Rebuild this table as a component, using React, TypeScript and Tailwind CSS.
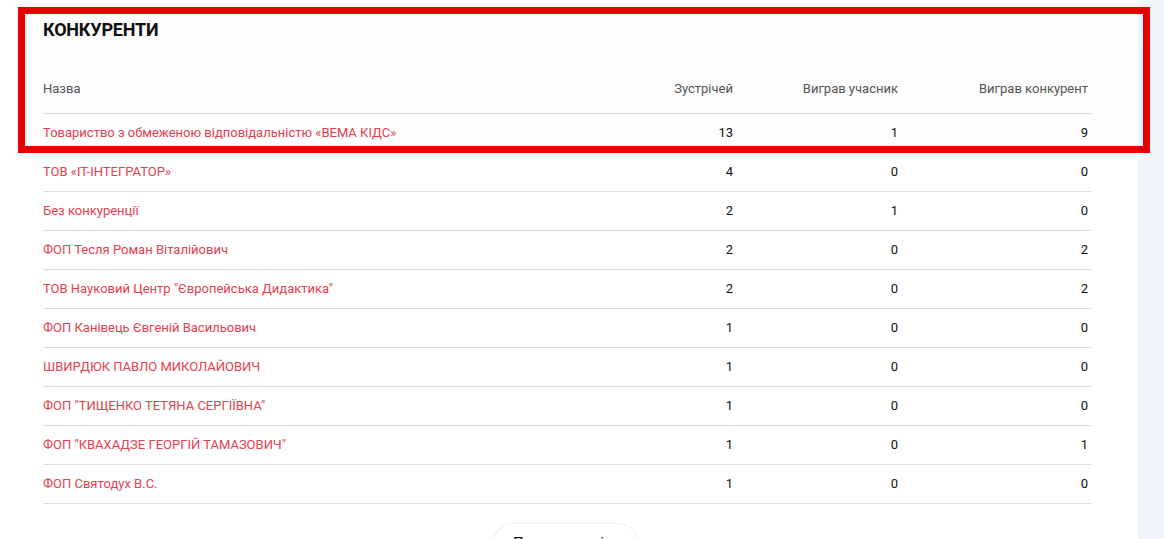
import React from "react";

const rows: [string, number, number, number][] = [
  ["Товариство з обмеженою відповідальністю «ВЕМА КІДС»", 13, 1, 9],
  ["ТОВ «ІТ-ІНТЕГРАТОР»", 4, 0, 0],
  ["Без конкуренції", 2, 1, 0],
  ["ФОП Тесля Роман Віталійович", 2, 0, 2],
  ["ТОВ Науковий Центр \"Європейська Дидактика\"", 2, 0, 2],
  ["ФОП Канівець Євгеній Васильович", 1, 0, 0],
  ["ШВИРДЮК ПАВЛО МИКОЛАЙОВИЧ", 1, 0, 0],
  ["ФОП \"ТИЩЕНКО ТЕТЯНА СЕРГІЇВНА\"", 1, 0, 0],
  ["ФОП \"КВАХАДЗЕ ГЕОРГІЙ ТАМАЗОВИЧ\"", 1, 0, 1],
  ["ФОП Святодух В.С.", 1, 0, 0],
];

export default function App() {
  return (
    <div
      className="relative w-[1164px] h-[539px] overflow-hidden flex bg-white"
      style={{ fontFamily: "Roboto, 'Noto Sans', sans-serif" }}
    >
      <div className="w-[1138px] shrink-0 bg-white pl-[43px] pr-[46px] pt-[18px]">
        <h2 className="text-[18px] leading-[24px] font-bold text-[#111] tracking-[-0.2px]">
          КОНКУРЕНТИ
        </h2>
        <div className="mt-[39px] grid grid-cols-[564px_130px_165px_190px] border-b border-[#dedede] pb-[16px] text-[13px] leading-[16px] text-[#555]">
          <div>Назва</div>
          <div className="text-right pr-[4px]">Зустрічей</div>
          <div className="text-right pr-[4px]">Виграв учасник</div>
          <div className="text-right pr-[4px]">Виграв конкурент</div>
        </div>
        {rows.map(([name, a, b, c]) => (
          <div
            key={name}
            className="grid grid-cols-[564px_130px_165px_190px] h-[39px] items-center border-b border-[#dedede] text-[13px] leading-[16px]"
          >
            <div className="text-[#e5404f]">{name}</div>
            <div className="text-right pr-[4px] text-[#111]">{a}</div>
            <div className="text-right pr-[4px] text-[#111]">{b}</div>
            <div className="text-right pr-[4px] text-[#111]">{c}</div>
          </div>
        ))}
        <div className="flex justify-center mt-[19px] pr-[3px]">
          <button className="w-[148px] h-[44px] rounded-[22px] border border-[#efefef] bg-white text-[15px] leading-[18px] text-[#111] pt-[10px] self-start text-left pl-[20px] flex items-start">
            Показати всіх
          </button>
        </div>
      </div>
      <div className="flex-1 bg-[#f2f5f7] pt-[28px]">
        <span className="text-[20px] leading-[24px] text-white/80">а</span>
      </div>
      <div className="absolute left-[18px] top-[7px] w-[1132px] h-[146px] border-[7px] border-[#e60000] bg-black/[0.008]" />
    </div>
  );
}
